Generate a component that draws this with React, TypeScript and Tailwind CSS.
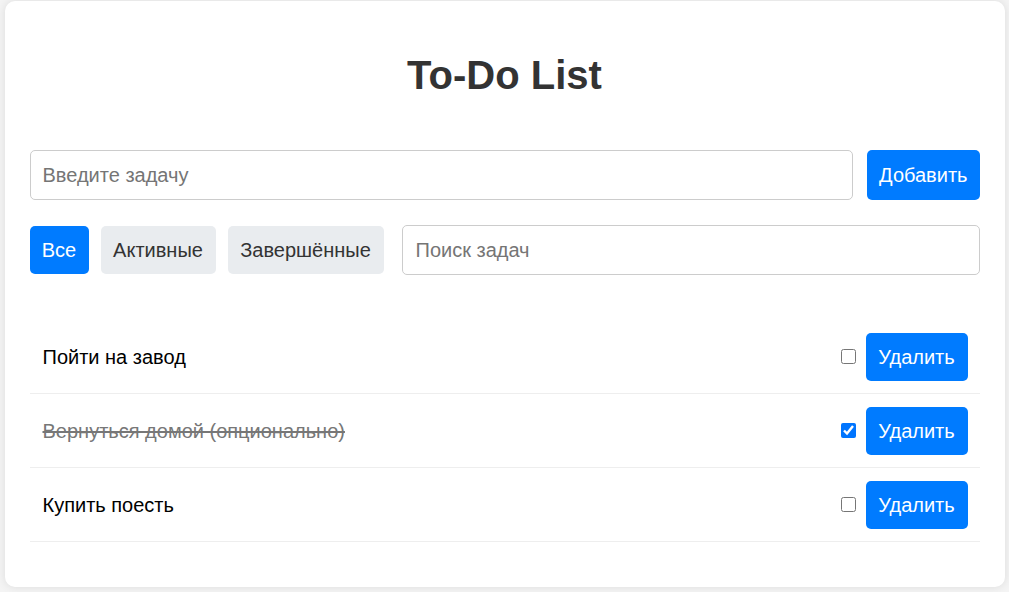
import React, { useState } from "react";

type Task = { id: number; text: string; done: boolean };

export default function App() {
  const [tasks, setTasks] = useState<Task[]>([
    { id: 1, text: "Пойти на завод", done: false },
    { id: 2, text: "Вернуться домой (опционально)", done: true },
    { id: 3, text: "Купить поесть", done: false },
  ]);
  const [filter, setFilter] = useState("all");

  const toggle = (id: number) =>
    setTasks((t) => t.map((x) => (x.id === id ? { ...x, done: !x.done } : x)));
  const remove = (id: number) => setTasks((t) => t.filter((x) => x.id !== id));

  return (
    <div
      className="min-h-[592px] bg-[#f4f4f4] pt-[1px]"
      style={{ fontFamily: '"Liberation Sans", Arial, sans-serif' }}
    >
      <div className="mx-auto w-[1000px] rounded-[10px] bg-white px-[25px] pb-[45px] pt-[25px] shadow-[0_0_10px_rgba(0,0,0,0.1)]">
        <h1 className="mb-[52px] mt-[26px] text-center text-[40px] font-bold leading-[46px] text-[#333]">
          To-Do List
        </h1>

        <div className="flex items-center gap-[14px]">
          <input
            className="h-[50px] flex-1 rounded-[5px] border border-[#ccc] px-[12px] text-[20px] text-[#333] outline-none placeholder:text-[#757575]"
            placeholder="Введите задачу"
          />
          <button className="h-[50px] rounded-[5px] bg-[#007bff] px-[12px] text-[20px] text-white">
            Добавить
          </button>
        </div>

        <div className="mt-[25px] flex items-center">
          <div className="flex items-center gap-[12px]">
            <button
              onClick={() => setFilter("all")}
              className={`h-[48px] w-[59px] rounded-[5px] text-[20px] ${
                filter === "all" ? "bg-[#007bff] text-white" : "bg-[#e9ecef] text-[#333]"
              }`}
            >
              Все
            </button>
            <button
              onClick={() => setFilter("active")}
              className={`h-[48px] w-[115px] rounded-[5px] text-[20px] ${
                filter === "active" ? "bg-[#007bff] text-white" : "bg-[#e9ecef] text-[#333]"
              }`}
            >
              Активные
            </button>
            <button
              onClick={() => setFilter("done")}
              className={`h-[48px] w-[156px] rounded-[5px] text-[20px] ${
                filter === "done" ? "bg-[#007bff] text-white" : "bg-[#e9ecef] text-[#333]"
              }`}
            >
              Завершённые
            </button>
          </div>
          <input
            className="ml-[18px] h-[50px] flex-1 rounded-[5px] border border-[#ccc] px-[13px] text-[20px] text-[#333] outline-none placeholder:text-[#757575]"
            placeholder="Поиск задач"
          />
        </div>

        <ul className="mt-[45px]">
          {tasks
            .filter((t) => (filter === "all" ? true : filter === "done" ? t.done : !t.done))
            .map((t) => (
              <li
                key={t.id}
                className="flex h-[74px] items-center border-b border-[#eee] pl-[13px] pr-[12px]"
              >
                <span
                  className={`flex-1 text-[20px] ${
                    t.done ? "text-[#777] line-through" : "text-black"
                  }`}
                >
                  {t.text}
                </span>
                <input
                  type="checkbox"
                  checked={t.done}
                  onChange={() => toggle(t.id)}
                  className="m-0 mr-[10px] h-[15px] w-[15px] accent-[#0075ff]"
                />
                <button
                  onClick={() => remove(t.id)}
                  className="h-[48px] w-[102px] rounded-[5px] bg-[#007bff] text-[20px] text-white"
                >
                  Удалить
                </button>
              </li>
            ))}
        </ul>
      </div>
    </div>
  );
}
